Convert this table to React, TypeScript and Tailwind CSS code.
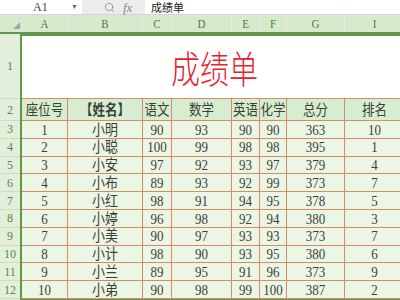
import { Search } from "lucide-react";

const rows = [
  ["1", "小明", "90", "93", "90", "90", "363", "10"],
  ["2", "小聪", "100", "99", "98", "98", "395", "1"],
  ["3", "小安", "97", "92", "93", "97", "379", "4"],
  ["4", "小布", "89", "93", "92", "99", "373", "7"],
  ["5", "小红", "98", "91", "94", "95", "378", "5"],
  ["6", "小婷", "96", "98", "92", "94", "380", "3"],
  ["7", "小美", "90", "97", "93", "93", "373", "7"],
  ["8", "小计", "98", "90", "93", "95", "380", "6"],
  ["9", "小兰", "89", "95", "91", "96", "373", "9"],
  ["10", "小弟", "90", "98", "99", "100", "387", "2"],
];

const heads = ["座位号", "【姓名】", "语文", "数学", "英语", "化学", "总分", "排名"];
const widths = ["w-[46px]", "w-[75px]", "w-[29px]", "w-[60px]", "w-[28px]", "w-[27px]", "w-[58px]", "w-[60px]"];
const letters = ["A", "B", "C", "D", "E", "F", "G", "I"];

function Cells({ vals, cls }: { vals: string[]; cls: string }) {
  return (
    <>
      {vals.map((v, i) => (
        <div
          key={i}
          className={`${widths[i]} shrink-0 flex items-center justify-center border-r border-[#d98a68] ${cls}`}
        >
          <span className={`inline-block scale-y-[1.15] ${i === 1 && v.startsWith("【") ? "font-bold" : ""}`}>{v}</span>
        </div>
      ))}
    </>
  );
}

export default function App() {
  return (
    <div
      className="w-[400px] h-[300px] overflow-hidden bg-white text-[#3a3f38]"
      style={{ fontFamily: '"Liberation Serif", "Noto Sans CJK SC", serif' }}
    >
      {/* formula bar */}
      <div className="h-[15px] flex items-center border-b border-[#d4d4d4] text-[12px] leading-[15px]">
        <div className="w-[82px] h-full flex items-center bg-white">
          <span className="ml-[33px] text-[#444]">A1</span>
          <span className="ml-auto mr-[4px] text-[7px] text-[#666]">▼</span>
        </div>
        <div className="w-[63px] h-full bg-[#ececec] flex items-center">
          <Search size={11} strokeWidth={1.5} className="ml-[22px] text-[#777]" />
          <span className="ml-[8px] italic text-[#888] text-[13px]">fx</span>
        </div>
        <div
          className="flex-1 h-full pl-[6px] pt-[1px] text-[11px] leading-[13px] text-[#222]"
          style={{ fontFamily: '"Noto Sans CJK SC", sans-serif' }}
        >
          成绩单
        </div>
      </div>

      {/* column header */}
      <div className="h-[19px] flex bg-[#d7eacb] border-b-2 border-[#5e9a45] text-[11px] text-[#4a8039]">
        <div className="w-[22px] shrink-0 flex items-end justify-end pr-[2px] pb-[1px]">
          <span className="text-[7px] text-[#9aa]">◢</span>
        </div>
        {letters.map((l, i) => (
          <div key={l} className={`${widths[i]} shrink-0 flex items-center justify-center border-r border-[#e4f0dc]`}>
            <span className="inline-block scale-y-[1.2]">{l}</span>
          </div>
        ))}
      </div>

      <div className="flex">
        {/* row header */}
        <div className="w-[20px] shrink-0 bg-[#e3efdb] text-[12px] text-[#4f8a3f] flex flex-col">
          <div className="h-[65px] flex items-center justify-center border-b border-[#cfdcc6]">1</div>
          <div className="h-[22px] flex items-center justify-center border-b border-[#cfdcc6]">2</div>
          {rows.map((_, i) => (
            <div key={i} className="h-[17.8px] flex items-center justify-center border-b border-[#cfdcc6]">
              {i + 3}
            </div>
          ))}
        </div>

        {/* table */}
        <div className="flex-1 border-l-2 border-t-2 border-b-2 border-[#5e9a45] flex flex-col text-[13px]">
          <div className="h-[63px] flex items-center justify-center bg-white border-b border-[#d98a68]">
            <span
              className="inline-block scale-y-[1.3] text-[29px] font-light text-[#e5232e] ml-[2px]"
              style={{ fontFamily: '"Noto Sans CJK SC", sans-serif' }}
            >
              成绩单
            </span>
          </div>
          <div className="h-[22px] flex bg-[#d6eecf] border-b border-[#d98a68]" style={{ fontFamily: '"Noto Sans CJK SC", sans-serif' }}>
            <Cells vals={heads} cls="text-[12.5px]" />
          </div>
          {rows.map((r, i) => (
            <div key={i} className="h-[17.8px] flex bg-[#ecf6e5] border-b border-[#d98a68]">
              <Cells vals={r} cls="" />
            </div>
          ))}
        </div>
      </div>
    </div>
  );
}
